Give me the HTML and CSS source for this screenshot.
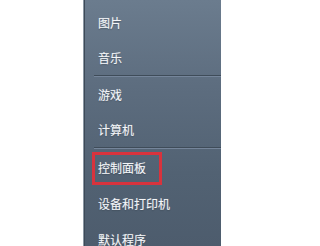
FILE: index.html
```html
<!DOCTYPE html>
<html lang="zh-CN">
<head>
<meta charset="utf-8">
<title>开始菜单</title>
<link rel="stylesheet" href="styles.css">
</head>
<body>
<div class="page">
  <div class="blank"></div>
  <nav class="panel">
    <div class="item">图片</div>
    <div class="item">音乐</div>
    <div class="sep"></div>
    <div class="item">游戏</div>
    <div class="item">计算机</div>
    <div class="sep"></div>
    <div class="item item-tall highlighted">控制面板<span class="mark"></span></div>
    <div class="item item-tall">设备和打印机</div>
    <div class="item item-tall">默认程序</div>
  </nav>
</div>
</body>
</html>
```
FILE: styles.css
```css
html, body {
  margin: 0;
  padding: 0;
  background: #ffffff;
  overflow: hidden;
}
.page {
  display: flex;
  width: 221px;
  height: 246px;
}
.blank {
  width: 83px;
  flex: none;
  background: #ffffff;
}
.panel {
  flex: 1;
  display: flex;
  flex-direction: column;
  padding-top: 5px;
  background: linear-gradient(180deg, #6b7c8e 0%, #5d6d7f 35%, #526273 70%, #4d5c6d 100%);
  border-left: 1px solid #8a96a2;
  box-shadow: inset 1px 0 0 #3d4a58;
  font-family: "Noto Sans CJK SC", "Noto Sans", sans-serif;
  font-size: 12px;
  color: #f4f6f9;
  overflow: hidden;
}
.item {
  position: relative;
  height: 35px;
  flex: none;
  display: flex;
  align-items: center;
  padding-left: 14px;
  text-shadow: 0 0 1px rgba(255, 255, 255, 0.35), 0 1px 1px rgba(30, 40, 50, 0.35);
}
.item-tall {
  height: 36px;
}
.sep {
  flex: none;
  height: 1px;
  margin-left: 10px;
  background: #3f4c59;
  border-bottom: 1px solid #75859a;
}
.mark {
  position: absolute;
  left: 8px;
  top: 3px;
  width: 64px;
  height: 27px;
  border: 3px solid #d8333d;
}
```
